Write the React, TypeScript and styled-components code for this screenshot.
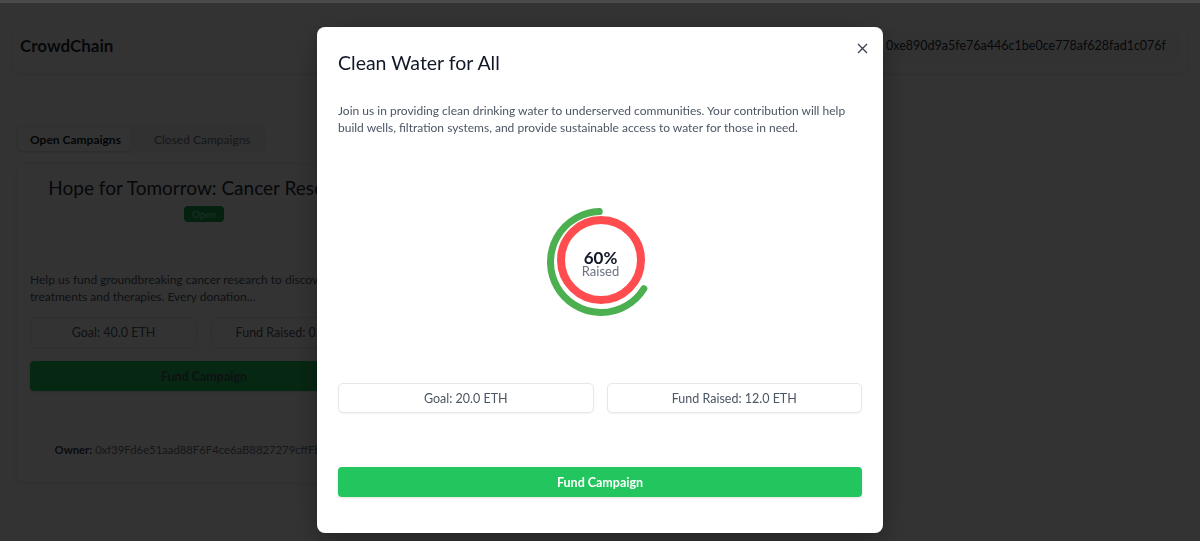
import * as React from 'react';
import styled, { createGlobalStyle } from 'styled-components';

const GlobalStyle = createGlobalStyle`
  * { box-sizing: border-box; }
  body {
    margin: 0;
    background: #ffffff;
    font-family: Lato, "Noto Sans", sans-serif;
    color: #111827;
  }
`

const Page = styled.div`
  min-height: 541px;
  padding: 27px 13px;
`

const HeaderCard = styled.header`
  display: flex;
  align-items: flex-start;
  justify-content: space-between;
  height: 46px;
  padding: 3px 7px;
  background: #fff;
  border-radius: 8px;
  box-shadow: 0 1px 4px rgba(0,0,0,0.12);
`

const Brand = styled.h1`
  margin: 0;
  font-size: 17px;
  line-height: 32px;
  font-weight: 700;
  color: #1f2937;
`

const AccountPill = styled.div`
  height: 32px;
  line-height: 32px;
  padding: 0 14px;
  border-radius: 6px;
  background: #f9fafb;
  font-size: 12.5px;
  color: #1f2937;
`

const Main = styled.main`
  padding: 52px 3px 0;
`

const TabList = styled.div`
  display: inline-flex;
  align-items: center;
  padding: 2px;
  width: 250px;
  height: 28px;
  background: #f3f4f6;
  border-radius: 6px;
`

const Tab = styled.button<{ $active?: boolean }>`
  border: none;
  white-space: nowrap;
  height: 24px;
  width: ${p => p.$active ? '112px' : 'auto'};
  padding: 0 12px;
  border-radius: 4px;
  font-family: inherit;
  font-size: 12px;
  font-weight: ${p => p.$active ? 700 : 400};
  color: ${p => p.$active ? '#111827' : '#6b7280'};
  background: ${p => p.$active ? '#fff' : 'transparent'};
  box-shadow: ${p => p.$active ? '0 1px 2px rgba(0,0,0,0.1)' : 'none'};
  margin-right: ${p => p.$active ? '12px' : '0'};
`

const CampaignCard = styled.article`
  margin-top: 10px;
  width: 376px;
  height: 320px;
  padding: 12px 13px;
  background: #fff;
  border: 1px solid #eceef1;
  border-radius: 8px;
  box-shadow: 0 2px 6px rgba(0,0,0,0.08);
  display: flex;
  flex-direction: column;
  align-items: center;
`

const CardTitle = styled.h2`
  margin: 0;
  font-size: 19px;
  line-height: 24px;
  font-weight: 400;
  color: #1f2937;
  white-space: nowrap;
`

const Badge = styled.span`
  margin-top: 6px;
  height: 16px;
  line-height: 16px;
  padding: 0 8px;
  border-radius: 4px;
  background: #16a34a;
  color: #86efac;
  font-size: 10px;
`

const CardText = styled.p`
  align-self: stretch;
  margin: 49px 0 0;
  font-size: 12px;
  line-height: 17px;
  color: #4b5563;
`

const StatRow = styled.div<{ $gap: number }>`
  align-self: stretch;
  display: grid;
  grid-template-columns: 1fr 1fr;
  gap: ${p => p.$gap}px;
`

const StatBox = styled.div<{ $h: number }>`
  height: ${p => p.$h}px;
  display: flex;
  align-items: center;
  justify-content: center;
  border: 1px solid #e5e7eb;
  border-radius: 5px;
  background: #fff;
  box-shadow: 0 1px 2px rgba(0,0,0,0.05);
  font-size: 12.5px;
  color: #4b5563;
  white-space: nowrap;
`

const FundButton = styled.button<{ $muted?: boolean }>`
  align-self: stretch;
  width: 100%;
  height: 30px;
  border: none;
  border-radius: 4px;
  background: #22c55e;
  color: ${p => p.$muted ? '#4b5563' : '#fff'};
  font-family: inherit;
  font-size: 12.5px;
  font-weight: 700;
  box-shadow: 0 1px 3px rgba(0,0,0,0.12);
`

const Owner = styled.p`
  margin: 52px 0 0;
  font-size: 11.3px;
  color: #6b7280;
  white-space: nowrap;
  b { color: #374151; font-weight: 700; }
`

// ---- modal ----------------------------------------------------------------

const Overlay = styled.div`
  position: fixed;
  inset: 0;
  background: rgba(0,0,0,0.8);
  border-top: 3px solid #4a4a4a;
  display: flex;
  justify-content: center;
  align-items: flex-start;
  padding-top: 24px;
`

const Modal = styled.div`
  position: relative;
  width: 566px;
  padding: 24px 21px 36px;
  background: #fff;
  border-radius: 8px;
  box-shadow: 0 10px 30px rgba(0,0,0,0.3);
`

const CloseButton = styled.button`
  position: absolute;
  top: 14px;
  right: 14px;
  width: 14px;
  height: 14px;
  padding: 0;
  border: none;
  background: none;
  color: #374151;
  display: flex;
  align-items: center;
  justify-content: center;
`

const ModalTitle = styled.h2`
  margin: 0;
  font-size: 19.5px;
  line-height: 24px;
  font-weight: 400;
  color: #111827;
`

const ModalText = styled.p`
  margin: 27px 0 0;
  font-size: 12px;
  line-height: 17px;
  color: #4b5563;
`

const ChartWrap = styled.div`
  margin-top: 21px;
  height: 206px;
  display: flex;
  align-items: center;
  justify-content: center;
`

const Ring = styled.div`
  position: relative;
  width: 120px;
  height: 120px;
  margin: 4px 0 0 1px;
`

const RingLabel = styled.div`
  position: absolute;
  inset: 0;
  display: flex;
  flex-direction: column;
  align-items: center;
  justify-content: center;
  padding-top: 4px;
`

const Percent = styled.span`
  font-size: 17px;
  line-height: 15px;
  font-weight: 700;
  color: #111827;
`

const Raised = styled.span`
  font-size: 13px;
  line-height: 13px;
  color: #6b7280;
`

const ModalStats = styled(StatRow)`
  margin-top: 20px;
`

const ModalFooter = styled.div`
  margin-top: 54px;
`

function arcPath(cx: number, cy: number, r: number, fromDeg: number, toDeg: number) {
  // angles in math degrees, drawn counter-clockwise on screen
  const p = (d: number) => {
    const a = (d * Math.PI) / 180;
    return [cx + r * Math.cos(a), cy - r * Math.sin(a)];
  };
  const [x1, y1] = p(fromDeg);
  const [x2, y2] = p(toDeg);
  const span = ((toDeg - fromDeg) % 360 + 360) % 360;
  const large = span > 180 ? 1 : 0;
  return `M ${x1} ${y1} A ${r} ${r} 0 ${large} 0 ${x2} ${y2}`;
}

function ProgressRing({ percent }: { percent: number }) {
  const start = 92;
  const end = start + 3.6 * percent + 20;
  return (
    <Ring>
      <svg width="120" height="120" viewBox="0 0 120 120">
        <circle cx="60" cy="58" r="40" fill="none" stroke="#ff4d4f" strokeWidth="8" />
        <path d={arcPath(60, 60, 50.5, start, end)} fill="none" stroke="#4caf50" strokeWidth="7" strokeLinecap="round" />
      </svg>
      <RingLabel>
        <Percent>{percent}%</Percent>
        <Raised>Raised</Raised>
      </RingLabel>
    </Ring>
  );
}

export default function App() {
  return (
    <>
      <GlobalStyle />
      <Page>
        <HeaderCard>
          <Brand>CrowdChain</Brand>
          <AccountPill>Account: 0xe890d9a5fe76a446c1be0ce778af628fad1c076f</AccountPill>
        </HeaderCard>
        <Main>
          <TabList>
            <Tab $active>Open Campaigns</Tab>
            <Tab>Closed Campaigns</Tab>
          </TabList>
          <CampaignCard>
            <CardTitle>Hope for Tomorrow: Cancer Research</CardTitle>
            <Badge>Open</Badge>
            <CardText>
              Help us fund groundbreaking cancer research to discover new treatments and therapies. Every donation...
            </CardText>
            <StatRow $gap={14} style={{ marginTop: 12 }}>
              <StatBox $h={31}>Goal: 40.0 ETH</StatBox>
              <StatBox $h={31}>Fund Raised: 0.0 ETH</StatBox>
            </StatRow>
            <div style={{ alignSelf: 'stretch', marginTop: 13 }}>
              <FundButton $muted>Fund Campaign</FundButton>
            </div>
            <Owner><b>Owner:</b> 0xf39Fd6e51aad88F6F4ce6aB8827279cffFb92266</Owner>
          </CampaignCard>
        </Main>
      </Page>

      <Overlay>
        <Modal>
          <CloseButton aria-label="Close">
            <svg width="11" height="11" viewBox="0 0 11 11">
              <path d="M1 1 L10 10 M10 1 L1 10" stroke="currentColor" strokeWidth="1.3" />
            </svg>
          </CloseButton>
          <ModalTitle>Clean Water for All</ModalTitle>
          <ModalText>
            Join us in providing clean drinking water to underserved communities. Your contribution will help build wells, filtration systems, and provide sustainable access to water for those in need.
          </ModalText>
          <ChartWrap>
            <ProgressRing percent={60} />
          </ChartWrap>
          <ModalStats $gap={13}>
            <StatBox $h={30}>Goal: 20.0 ETH</StatBox>
            <StatBox $h={30}>Fund Raised: 12.0 ETH</StatBox>
          </ModalStats>
          <ModalFooter>
            <FundButton>Fund Campaign</FundButton>
          </ModalFooter>
        </Modal>
      </Overlay>
    </>
  );
}
